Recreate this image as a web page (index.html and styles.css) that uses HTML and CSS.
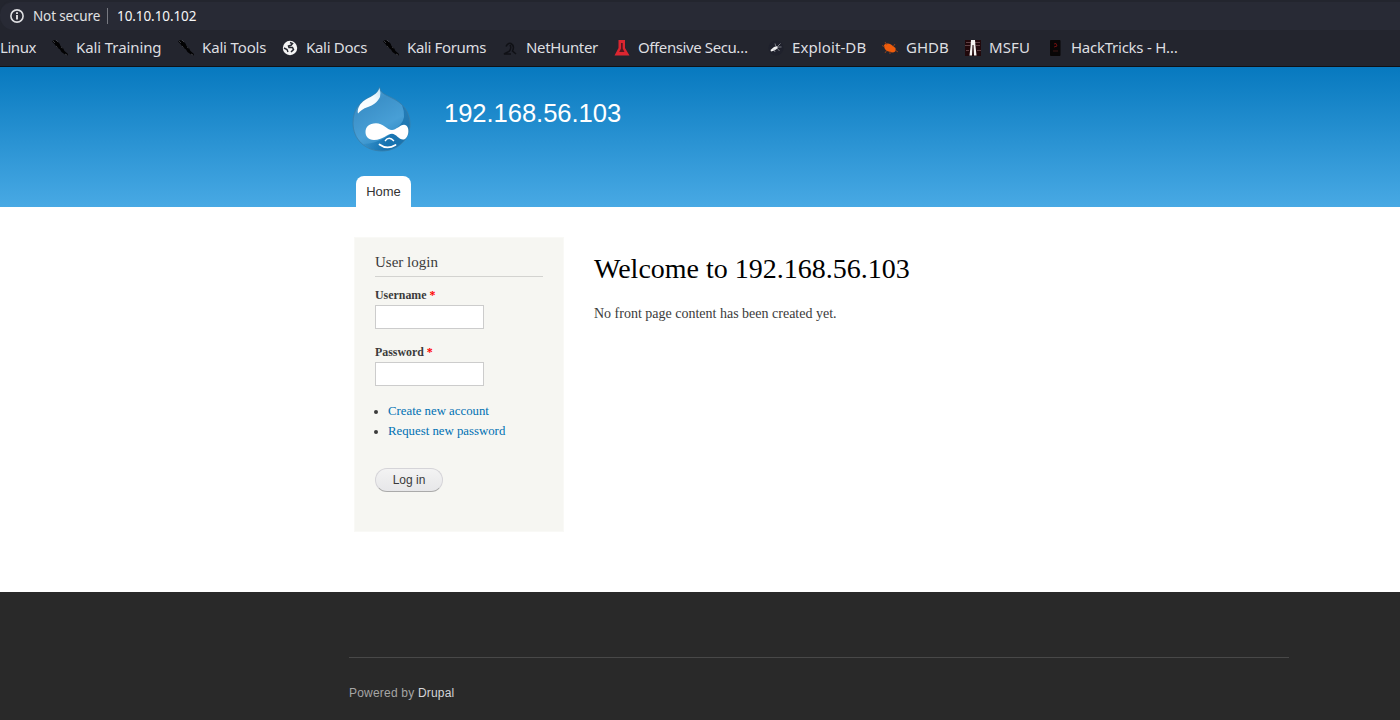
FILE: index.html
```html
<!DOCTYPE html>
<html lang="en">
<head>
<meta charset="utf-8">
<title>Welcome to 192.168.56.103</title>
<link rel="stylesheet" href="styles.css">
</head>
<body>
<svg class="defs" width="0" height="0">
  <symbol id="kali" viewBox="0 0 16 16">
    <path d="M0 1.500 2 0 5 1 7.500 3.500 8.500 6 11 8 12.500 11 16 14 15.500 15.500 13 14.500 9.500 12 8 9.500 4.500 7 2.500 4Z" fill="#020203"/>
    <path d="M1 1 3 3M4 0 6 2M9 7 10.500 8M13 14 15 15M4 6 5.500 7.500" stroke="#505258" stroke-width=".7" fill="none"/>
  </symbol>
  <symbol id="roach" viewBox="0 0 16 16">
    <path d="M2 5Q5 2.500 9 4.500L13.500 8Q14.500 12.500 10 12.500L5 11Q2 9 2 5Z" fill="#ee5c0c"/>
    <path d="M3 7 0 5.500M5 5 3 2M11 7 13 4M5 10 3 13M8 11 8 14M13 10 16 12" stroke="#a84718" stroke-width=".8" fill="none"/>
  </symbol>
</svg>
<div class="address">
  <svg class="info" viewBox="0 0 14 14"><circle cx="7" cy="7" r="6.100" fill="none" stroke="#dfe0e3" stroke-width="1.600"/><path d="M7 6v4.500M7 3.300v1.700" stroke="#e8e8ea" stroke-width="1.800"/></svg>
  <span class="insecure">Not secure</span><span class="divider"></span><span class="url">10.10.10.102</span>
</div>
<nav class="bookmarks">
  <a class="mark first"><span>Linux</span></a>
  <a class="mark training"><svg><use href="#kali"/></svg><span>Kali Training</span></a>
  <a class="mark tools"><svg><use href="#kali"/></svg><span>Kali Tools</span></a>
  <a class="mark docs"><svg viewBox="0 0 16 16"><circle cx="8" cy="8" r="7.200" fill="#f4f4f4"/><path d="M8 2.500 10.500 3.500 9 5.300 6.500 6 7 7.500 10.500 7.500 11.500 9.500 9 12" fill="none" stroke="#23252e" stroke-width="1.500"/><path d="M2 8 5 9.500 6 12" stroke="#23252e" stroke-width="1.400" fill="none"/></svg><span>Kali Docs</span></a>
  <a class="mark forums"><svg><use href="#kali"/></svg><span>Kali Forums</span></a>
  <a class="mark hunter"><svg viewBox="0 0 16 16"><path d="M4 6.500Q6 2.500 9 3.500 13 6 10.500 11L14 14M8 5Q10 8 7 11.500L2 14H9" fill="none" stroke="#101116" stroke-width="1.500"/></svg><span>NetHunter</span></a>
  <a class="mark offsec"><svg viewBox="0 0 16 16"><path d="M4.500 0H11V8L15.500 15.500H.5L4.500 8Z" fill="#dc2630"/><path d="M7 3H8.700V8.500L10.500 12H5.200L7 8.500Z" fill="#551720"/></svg><span>Offensive Secu…</span></a>
  <a class="mark exploit"><svg viewBox="0 0 16 16"><circle cx="8" cy="8" r="7.500" fill="#1f212c"/><path d="M2.500 10 6 7 9 6 10 8 6.500 10.500 3 11.500Z" fill="#f0f0f0"/><path d="M8 7 7 3.500M9 7 12.500 3.500M9 7H13.500M9 8 11.500 11M6 9.500 7 12" stroke="#85878f" stroke-width=".9" fill="none"/></svg><span>Exploit-DB</span></a>
  <a class="mark ghdb"><svg><use href="#roach"/></svg><span>GHDB</span></a>
  <a class="mark msfu"><svg viewBox="0 0 16 16"><path d="M0 0H16V16H0Z" fill="#21080b"/><path d="M1 2.500H6M10 2.500H15M0 5.500H5M11 5.500H15M1 10.500H4M12 10.500H16" stroke="#614044"/><path d="M6 0H10L10.500 6 11.500 15.500H9L8.500 5 7.500 5 7 15.500H4.500L5.500 7Z" fill="#f5f2f1"/></svg><span>MSFU</span></a>
  <a class="mark tricks"><svg viewBox="0 0 16 16"><rect x="3" width="10.500" height="16" rx="1" fill="#080606"/><path d="M7 4 9 3.500 10 6 7 7" stroke="#70100f" fill="none"/><path d="M6 11H11" stroke="#3a1715"/></svg><span>HackTricks - H…</span></a>
</nav>
<header class="header">
  <div class="brand">
    <svg class="logo" viewBox="9 5 66 70">
      <defs>
        <linearGradient id="drop" x1="0" y1="0" x2=".5" y2="1"><stop offset="0" stop-color="#59aadd"/><stop offset=".35" stop-color="#3c91c9"/><stop offset=".7" stop-color="#489fd6"/><stop offset="1" stop-color="#2b87c1"/></linearGradient>
        <linearGradient id="shine" x1="0" y1="1" x2="1" y2="0"><stop offset="0" stop-color="#fff"/><stop offset=".65" stop-color="#f4fbff"/><stop offset="1" stop-color="#c6e2f3"/></linearGradient>
        <linearGradient id="shade" x1="0" y1="0" x2="1" y2="0"><stop offset="0" stop-color="#1676b5" stop-opacity=".3"/><stop offset=".5" stop-color="#0c6aaa"/><stop offset="1" stop-color="#1a70aa"/></linearGradient>
      </defs>
      <path d="M39.500 7C40.500 13 44 14 51 17.500 62 22.500 70 31 70 44 70 60 57 71 42 71 25 71 13 59 13 43 13 29 20 22 29 17.500 36 14 38 12 39.500 7Z" fill="url(#drop)"/>
      <path d="M62 25Q67 38 60 45C52 54 40 64 23 64Q31 71 42 71C57 71 70 60 70 44 70 36 67 29 62 25Z" fill="url(#shade)" opacity=".75"/>
      <path d="M39.500 7C40.500 13 44 14 51 17.500 62 22.500 70 31 70 44 70 60 57 71 42 71 25 71 13 59 13 43 13 29 20 22 29 17.500 36 14 38 12 39.500 7Z" fill="none" stroke="#397da8" stroke-width=".8"/>
      <path d="M39.500 8Q41 13 40 17C37 23 33 25 28 27 23 28.500 20 31 18 33.500 17 30 19 25 23 21.500 26 19 30 17.500 33 15.500 37 13 38.500 11 39.500 8Z" fill="url(#shine)"/>
      <path d="M36 43.300C43 43.300 47 50 52 50 56 50 60 44.700 64 44.700 71 45 69 59.500 63 59.500 59 59.500 56 53.700 52 53.700 47 53.700 43 60 34 60 28 60 25.500 56 25.500 52 25.500 47 29 43.300 36 43.300Z" fill="#fff"/>
      <path d="M45 61Q49 55.500 54 61" stroke="#fff" stroke-width="1.300" fill="none"/>
      <path d="M39.500 64.500Q47 70 55.500 65" stroke="#fff" stroke-width="1.800" stroke-linecap="round" fill="none"/>
    </svg>
    <span class="site-name">192.168.56.103</span>
  </div>
  <a class="tab">Home</a>
</header>
<main class="main">
  <aside class="login">
    <h2>User login</h2>
    <form>
      <label for="name">Username <b>*</b></label>
      <input id="name" type="text">
      <label for="pass">Password <b>*</b></label>
      <input id="pass" type="password">
      <ul><li><a>Create new account</a></li><li><a>Request new password</a></li></ul>
      <button type="button">Log in</button>
    </form>
  </aside>
  <section class="content">
    <h1>Welcome to 192.168.56.103</h1>
    <p>No front page content has been created yet.</p>
  </section>
</main>
<footer class="footer"><div class="powered">Powered by <a>Drupal</a></div></footer>
</body>
</html>
```
FILE: styles.css
```css
* { box-sizing: border-box; }
body { margin: 0; height: 720px; overflow: hidden; display: flex; flex-direction: column; background: #fff; color: #3b3b3b; font-family: "Liberation Serif", serif; }
.defs { position: absolute; }
.address { height: 30px; flex: none; display: flex; align-items: center; padding: 0 0 0 10px; background: #282a35; border-top: 2px solid #23252e; border-radius: 14px 0 0 14px; box-shadow: 0 0 0 15px #23252e; color: #e0e1e3; font: 13.5px/26px "Noto Sans", sans-serif; z-index: 1; }
.info { width: 14px; height: 14px; margin-right: 9px; }
.insecure { width: 74px; white-space: nowrap; letter-spacing: -.15px; }
.divider { width: 1px; height: 16px; background: #777981; margin-right: 9px; }
.url { color: #f6f6f7; letter-spacing: -.08px; }
.bookmarks { height: 37px; flex: none; display: flex; gap: 16px; align-items: center; background: #23252e; border-bottom: 1px solid #101116; color: #dedfe1; font: 15px/20px "Noto Sans", sans-serif; letter-spacing: -.15px; z-index: 2; }
.mark { display: flex; align-items: center; gap: 8px; flex: none; white-space: nowrap; }
.mark span { padding-bottom: 2px; }
.mark svg { width: 16px; height: 16px; flex: none; }
.first { width: 36px; letter-spacing: -.45px; }
.training { width: 110px; letter-spacing: -.1px; }
.tools { width: 88px; }
.docs { width: 85px; letter-spacing: -.3px; }
.forums { width: 103px; letter-spacing: -.35px; }
.hunter { width: 96px; letter-spacing: -.35px; }
.offsec { width: 138px; letter-spacing: -.4px; }
.exploit { width: 98px; letter-spacing: .1px; }
.ghdb { width: 67px; letter-spacing: 0; }
.msfu { width: 66px; letter-spacing: .1px; }
.tricks { width: 131px; letter-spacing: -.25px; }
.header { height: 140px; flex: none; display: flex; flex-direction: column; justify-content: space-between; align-items: flex-start; padding: 18px 0 0 349px; background: linear-gradient(#0779bf, #48a9e4); }
.brand { display: flex; }
.logo { width: 66px; height: 70px; }
.site-name { margin: 13px 0 0 29px; color: #fff; font: 25.6px/30px "Liberation Sans", sans-serif; letter-spacing: -.06px; }
.tab { width: 55px; height: 31px; margin-left: 7px; border-radius: 8px 8px 0 0; background: #fff; color: #333; text-align: center; font: 13px/31px "Liberation Sans", sans-serif; }
.main { height: 385px; flex: none; display: flex; align-items: flex-start; gap: 30px; padding: 30px 0 0 354px; }
.login { width: 210px; height: 295px; padding: 15px 20px 0; background: #f6f6f2; border: 1px solid #f9f9f6; }
.login h2 { margin: 0 0 10px; height: 24px; border-bottom: 1px solid #d3d3d0; font-size: 15px; font-weight: normal; line-height: 19px; }
.login label { display: block; height: 18px; font-size: 11.9px; font-weight: bold; line-height: 17px; }
.login label b { color: #f00; }
.login input { display: block; width: 109px; height: 24px; margin: 0 0 15px; border: 1px solid #ccc; background: #fff; }
.login ul { margin: 0; padding: 0 0 0 13px; font-size: 12.8px; line-height: 20px; }
.login a { color: #0071b3; }
.login button { display: block; width: 68px; height: 24px; margin-top: 27px; padding: 0; border: 1px solid #d5d4d8; border-bottom-color: #aaa; border-radius: 12px; background: linear-gradient(#f3f3f3, #e7e7e9); color: #3a3a3a; font: 12px/22px "Liberation Sans", sans-serif; }
.content h1 { margin: 15px 0 0; color: #000; font-size: 28px; font-weight: normal; line-height: 34px; }
.content p { margin: 19px 0 0; font-size: 14px; line-height: 18px; }
.footer { flex: 1; padding: 65px 0 0 349px; background: #292929; }
.powered { width: 940px; padding-top: 26px; border-top: 1px solid #484848; color: #a5a5a5; font: 12px/18px "Liberation Sans", sans-serif; letter-spacing: .2px; }
.powered a { color: #d5d5d8; }
```
